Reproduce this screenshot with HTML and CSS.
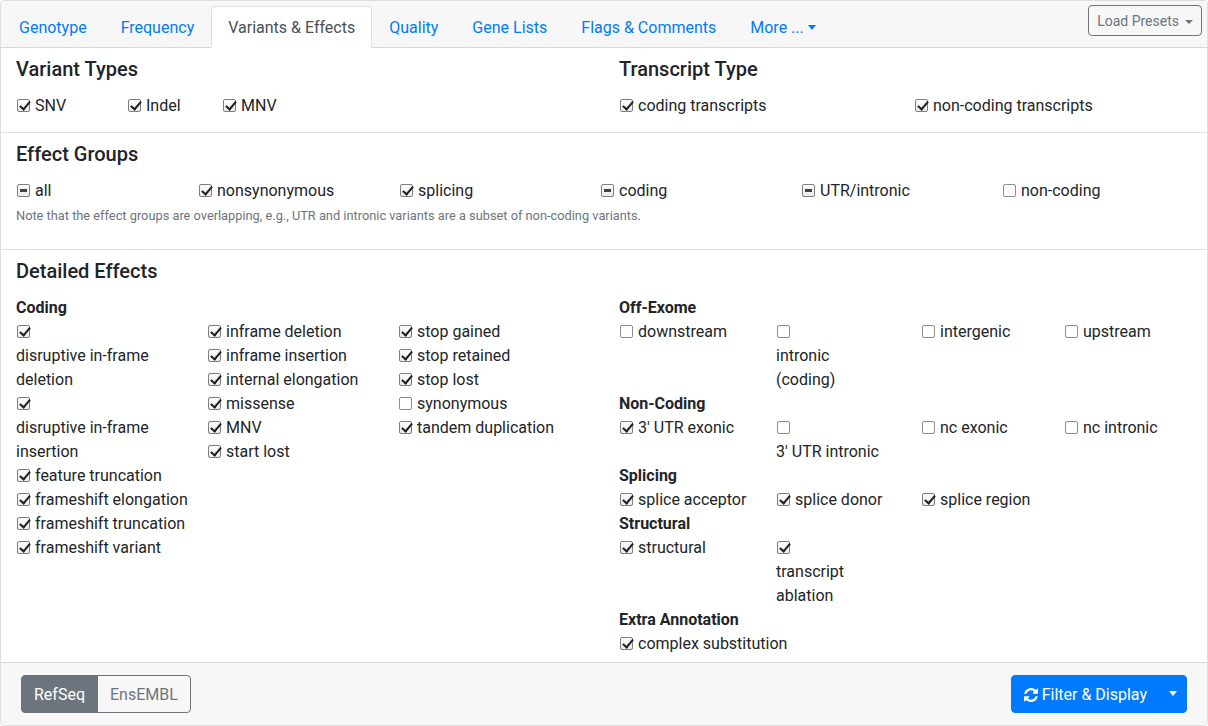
FILE: index.html
```html
<!DOCTYPE html>
<html>
<head>
<meta charset="utf-8">
<title>Filter</title>
<link rel="stylesheet" href="styles.css">
</head>
<body>
<div class="card">
  <div class="card-header">
    <ul class="tabs">
      <li><a class="tab">Genotype</a></li>
      <li><a class="tab">Frequency</a></li>
      <li><a class="tab active">Variants &amp; Effects</a></li>
      <li><a class="tab">Quality</a></li>
      <li><a class="tab">Gene Lists</a></li>
      <li><a class="tab">Flags &amp; Comments</a></li>
      <li><a class="tab">More ...<span class="caret"></span></a></li>
    </ul>
    <button class="btn-presets">Load Presets<span class="caret"></span></button>
  </div>

  <div class="card-body">
    <section class="sec">
      <div class="row">
        <div class="col">
          <h5 class="h5">Variant Types</h5>
          <div class="line">
            <div class="it w111"><span class="cb on"></span><span class="lbl">SNV</span></div>
            <div class="it w95"><span class="cb on"></span><span class="lbl">Indel</span></div>
            <div class="it"><span class="cb on"></span><span class="lbl">MNV</span></div>
          </div>
        </div>
        <div class="col">
          <h5 class="h5">Transcript Type</h5>
          <div class="line">
            <div class="it w295"><span class="cb on"></span><span class="lbl">coding transcripts</span></div>
            <div class="it"><span class="cb on"></span><span class="lbl">non-coding transcripts</span></div>
          </div>
        </div>
      </div>
    </section>

    <section class="sec pad">
      <h5 class="h5">Effect Groups</h5>
      <div class="line">
        <div class="it w182"><span class="cb ind"></span><span class="lbl">all</span></div>
        <div class="it w201"><span class="cb on"></span><span class="lbl">nonsynonymous</span></div>
        <div class="it w201"><span class="cb on"></span><span class="lbl">splicing</span></div>
        <div class="it w201"><span class="cb ind"></span><span class="lbl">coding</span></div>
        <div class="it w201"><span class="cb ind"></span><span class="lbl">UTR/intronic</span></div>
        <div class="it"><span class="cb"></span><span class="lbl">non-coding</span></div>
      </div>
      <p class="note">Note that the effect groups are overlapping, e.g., UTR and intronic variants are a subset of non-coding variants.</p>
    </section>

    <section class="sec sec-last">
      <h5 class="h5 pad">Detailed Effects</h5>
      <div class="row">
        <div class="col">
          <div class="sh">Coding</div>
          <div class="cgrid">
            <div class="stack">
              <div class="it"><span class="cb on"></span><span class="lbl">disruptive in-frame deletion</span></div>
              <div class="it"><span class="cb on"></span><span class="lbl">disruptive in-frame insertion</span></div>
              <div class="it"><span class="cb on"></span><span class="lbl">feature truncation</span></div>
              <div class="it"><span class="cb on"></span><span class="lbl">frameshift elongation</span></div>
              <div class="it"><span class="cb on"></span><span class="lbl">frameshift truncation</span></div>
              <div class="it"><span class="cb on"></span><span class="lbl">frameshift variant</span></div>
            </div>
            <div class="stack">
              <div class="it"><span class="cb on"></span><span class="lbl">inframe deletion</span></div>
              <div class="it"><span class="cb on"></span><span class="lbl">inframe insertion</span></div>
              <div class="it"><span class="cb on"></span><span class="lbl">internal elongation</span></div>
              <div class="it"><span class="cb on"></span><span class="lbl">missense</span></div>
              <div class="it"><span class="cb on"></span><span class="lbl">MNV</span></div>
              <div class="it"><span class="cb on"></span><span class="lbl">start lost</span></div>
            </div>
            <div class="stack">
              <div class="it"><span class="cb on"></span><span class="lbl">stop gained</span></div>
              <div class="it"><span class="cb on"></span><span class="lbl">stop retained</span></div>
              <div class="it"><span class="cb on"></span><span class="lbl">stop lost</span></div>
              <div class="it"><span class="cb"></span><span class="lbl">synonymous</span></div>
              <div class="it"><span class="cb on"></span><span class="lbl">tandem duplication</span></div>
            </div>
          </div>
        </div>
        <div class="col">
          <div class="sh">Off-Exome</div>
          <div class="rgrid">
            <div class="it"><span class="cb"></span><span class="lbl">downstream</span></div>
            <div class="it c2"><span class="cb"></span><span class="lbl">intronic (coding)</span></div>
            <div class="it"><span class="cb"></span><span class="lbl">intergenic</span></div>
            <div class="it"><span class="cb"></span><span class="lbl">upstream</span></div>
          </div>
          <div class="sh">Non-Coding</div>
          <div class="rgrid">
            <div class="it"><span class="cb on"></span><span class="lbl">3' UTR exonic</span></div>
            <div class="it c2"><span class="cb"></span><span class="lbl">3' UTR intronic</span></div>
            <div class="it"><span class="cb"></span><span class="lbl">nc exonic</span></div>
            <div class="it"><span class="cb"></span><span class="lbl">nc intronic</span></div>
          </div>
          <div class="sh">Splicing</div>
          <div class="rgrid">
            <div class="it"><span class="cb on"></span><span class="lbl">splice acceptor</span></div>
            <div class="it c2"><span class="cb on"></span><span class="lbl">splice donor</span></div>
            <div class="it"><span class="cb on"></span><span class="lbl">splice region</span></div>
          </div>
          <div class="sh">Structural</div>
          <div class="rgrid">
            <div class="it"><span class="cb on"></span><span class="lbl">structural</span></div>
            <div class="it c2"><span class="cb on"></span><span class="lbl">transcript ablation</span></div>
          </div>
          <div class="sh">Extra Annotation</div>
          <div class="rgrid">
            <div class="it span2"><span class="cb on"></span><span class="lbl">complex substitution</span></div>
          </div>
        </div>
      </div>
    </section>
  </div>

  <div class="card-footer">
    <div class="btn-group">
      <button class="btn btn-sec">RefSeq</button>
      <button class="btn btn-outline">EnsEMBL</button>
    </div>
    <div class="btn-group">
      <button class="btn btn-primary"><svg class="ico" viewBox="0 0 1536 1536" width="14" height="14"><path fill="currentColor" d="M1511 928q0 5-1 7-64 268-268 434.5T764 1536q-146 0-282.5-55T238 1324l-129 129q-19 19-45 19t-45-19-19-45V960q0-26 19-45t45-19h448q26 0 45 19t19 45-19 45l-137 137q71 66 161 102t187 36q134 0 250-65t186-179q11-17 53-117 8-23 30-23h192q13 0 22.5 9.5t9.5 22.5zm25-800v448q0 26-19 45t-45 19h-448q-26 0-45-19t-19-45 19-45l138-138Q969 256 768 256q-134 0-250 65T332 500q-11 17-53 117-8 23-30 23H50q-13 0-22.5-9.5T18 608v-7q65-268 270-434.5T768 0q146 0 284 55.5T1297 212l130-129q19-19 45-19t45 19 19 45z"/></svg> Filter &amp; Display</button>
      <button class="btn btn-primary btn-split"><span class="caret"></span></button>
    </div>
  </div>
</div>
</body>
</html>
```
FILE: styles.css
```css
* { box-sizing: border-box; }
html, body { margin: 0; padding: 0; }
body {
  font-family: Roboto, "Noto Sans", "Liberation Sans", sans-serif;
  font-size: 16px;
  line-height: 24px;
  color: #212529;
  background: #fff;
}

.card {
  width: 1208px;
  height: 726px;
  border: 1px solid rgba(0,0,0,.125);
  border-radius: 4px;
  display: flex;
  flex-direction: column;
  overflow: hidden;
}

/* header */
.card-header {
  display: flex;
  justify-content: space-between;
  align-items: flex-start;
  padding: 5px 5px 0 1px;
  background: #f7f7f7;
  border-bottom: 1px solid rgba(0,0,0,.125);
}
.tabs {
  display: flex;
  list-style: none;
  margin: 0 0 -1px;
  padding: 0;
}
.tab {
  display: block;
  padding: 9px 16px 7px;
  border: 1px solid transparent;
  border-radius: 4px 4px 0 0;
  color: #007bff;
  text-decoration: none;
  cursor: pointer;
}
.tab.active {
  color: #495057;
  background: #fff;
  border-color: #dee2e6 #dee2e6 #fff;
}
.caret {
  display: inline-block;
  margin-left: 4px;
  vertical-align: 3px;
  border-top: 5px solid currentColor;
  border-left: 4.5px solid transparent;
  border-right: 4.5px solid transparent;
}
.btn-presets {
  margin-top: -1px;
  font-family: Roboto, "Noto Sans", sans-serif;
  font-size: 14px;
  line-height: 21px;
  padding: 5px 8px 3px;
  border: 1px solid #6c757d;
  border-radius: 4px;
  color: #6c757d;
  background: transparent;
}
.btn-presets .caret {
  margin-left: 6px;
  vertical-align: 2px;
  border-top-width: 4.5px;
  border-left-width: 4px;
  border-right-width: 4px;
}

/* body */
.card-body {
  flex: 1;
  display: flex;
  flex-direction: column;
}
.sec {
  padding: 9px 0 14px;
  border-bottom: 1px solid #dee2e6;
}
.sec-last {
  flex: 1;
  padding-bottom: 6px;
  border-bottom: 0;
}
.pad { padding-left: 15px; padding-right: 15px; }
.h5 {
  font-size: 20px;
  font-weight: 500;
  line-height: 24px;
  margin: 0 0 13px;
}
.row {
  display: grid;
  grid-template-columns: 603px 603px;
}
.col { padding: 0 15px; }

.line { display: flex; }
.w111 { width: 111px; }
.w95 { width: 95px; }
.w295 { width: 295px; }
.w182 { width: 182px; }
.w201 { width: 201px; }

.it { display: block; }
.lbl { display: inline-block; }

.cb {
  display: inline-block;
  position: relative;
  width: 13px;
  height: 13px;
  margin: 0 5px 0 1px;
  vertical-align: -1px;
  border: 1px solid #8d8d8d;
  border-radius: 2px;
  background: #fff;
}
.cb.on, .cb.ind {
  background: linear-gradient(#fbfbfb, #ececec);
  border-color: #7f7f7f;
}
.cb.on::after {
  content: "";
  position: absolute;
  left: 4px;
  top: -1px;
  width: 4px;
  height: 9px;
  border: solid #222;
  border-width: 0 2px 2px 0;
  transform: rotate(40deg);
}
.cb.ind::after {
  content: "";
  position: absolute;
  left: 2px;
  top: 4px;
  width: 7px;
  height: 3px;
  background: #444;
}

.note {
  font-size: 12.8px;
  line-height: 19px;
  color: #6c757d;
  margin: 3px 0 10px;
}

.sh { font-weight: 700; }

.cgrid {
  display: grid;
  grid-template-columns: 191px 191px 191px;
}
.stack { padding-right: 15px; }

.rgrid {
  display: grid;
  grid-template-columns: 157px 145px 143px 1fr;
}
.rgrid .c2 { padding-right: 35px; }
.rgrid .span2 { grid-column: span 2; }

/* footer */
.card-footer {
  display: flex;
  justify-content: space-between;
  padding: 12px 20px;
  background: #f7f7f7;
  border-top: 1px solid rgba(0,0,0,.125);
}
.btn-group { display: flex; }
.btn {
  font-family: Roboto, "Noto Sans", sans-serif;
  font-size: 16px;
  line-height: 24px;
  padding: 7px 12px 5px;
  border: 1px solid;
  border-radius: 4px;
  margin: 0;
}
.btn-group .btn:first-child { border-top-right-radius: 0; border-bottom-right-radius: 0; }
.btn-group .btn:last-child { border-top-left-radius: 0; border-bottom-left-radius: 0; margin-left: -1px; }
.btn-sec { background: #6c757d; border-color: #6c757d; color: #fff; }
.btn-outline { background: transparent; border-color: #6c757d; color: #6c757d; }
.btn-primary { background: #007bff; border-color: #007bff; color: #fff; }
.btn-split { padding: 6px 9px; }
.btn-split .caret { margin-left: 0; vertical-align: 3px; }
.ico { vertical-align: -2px; }
```
